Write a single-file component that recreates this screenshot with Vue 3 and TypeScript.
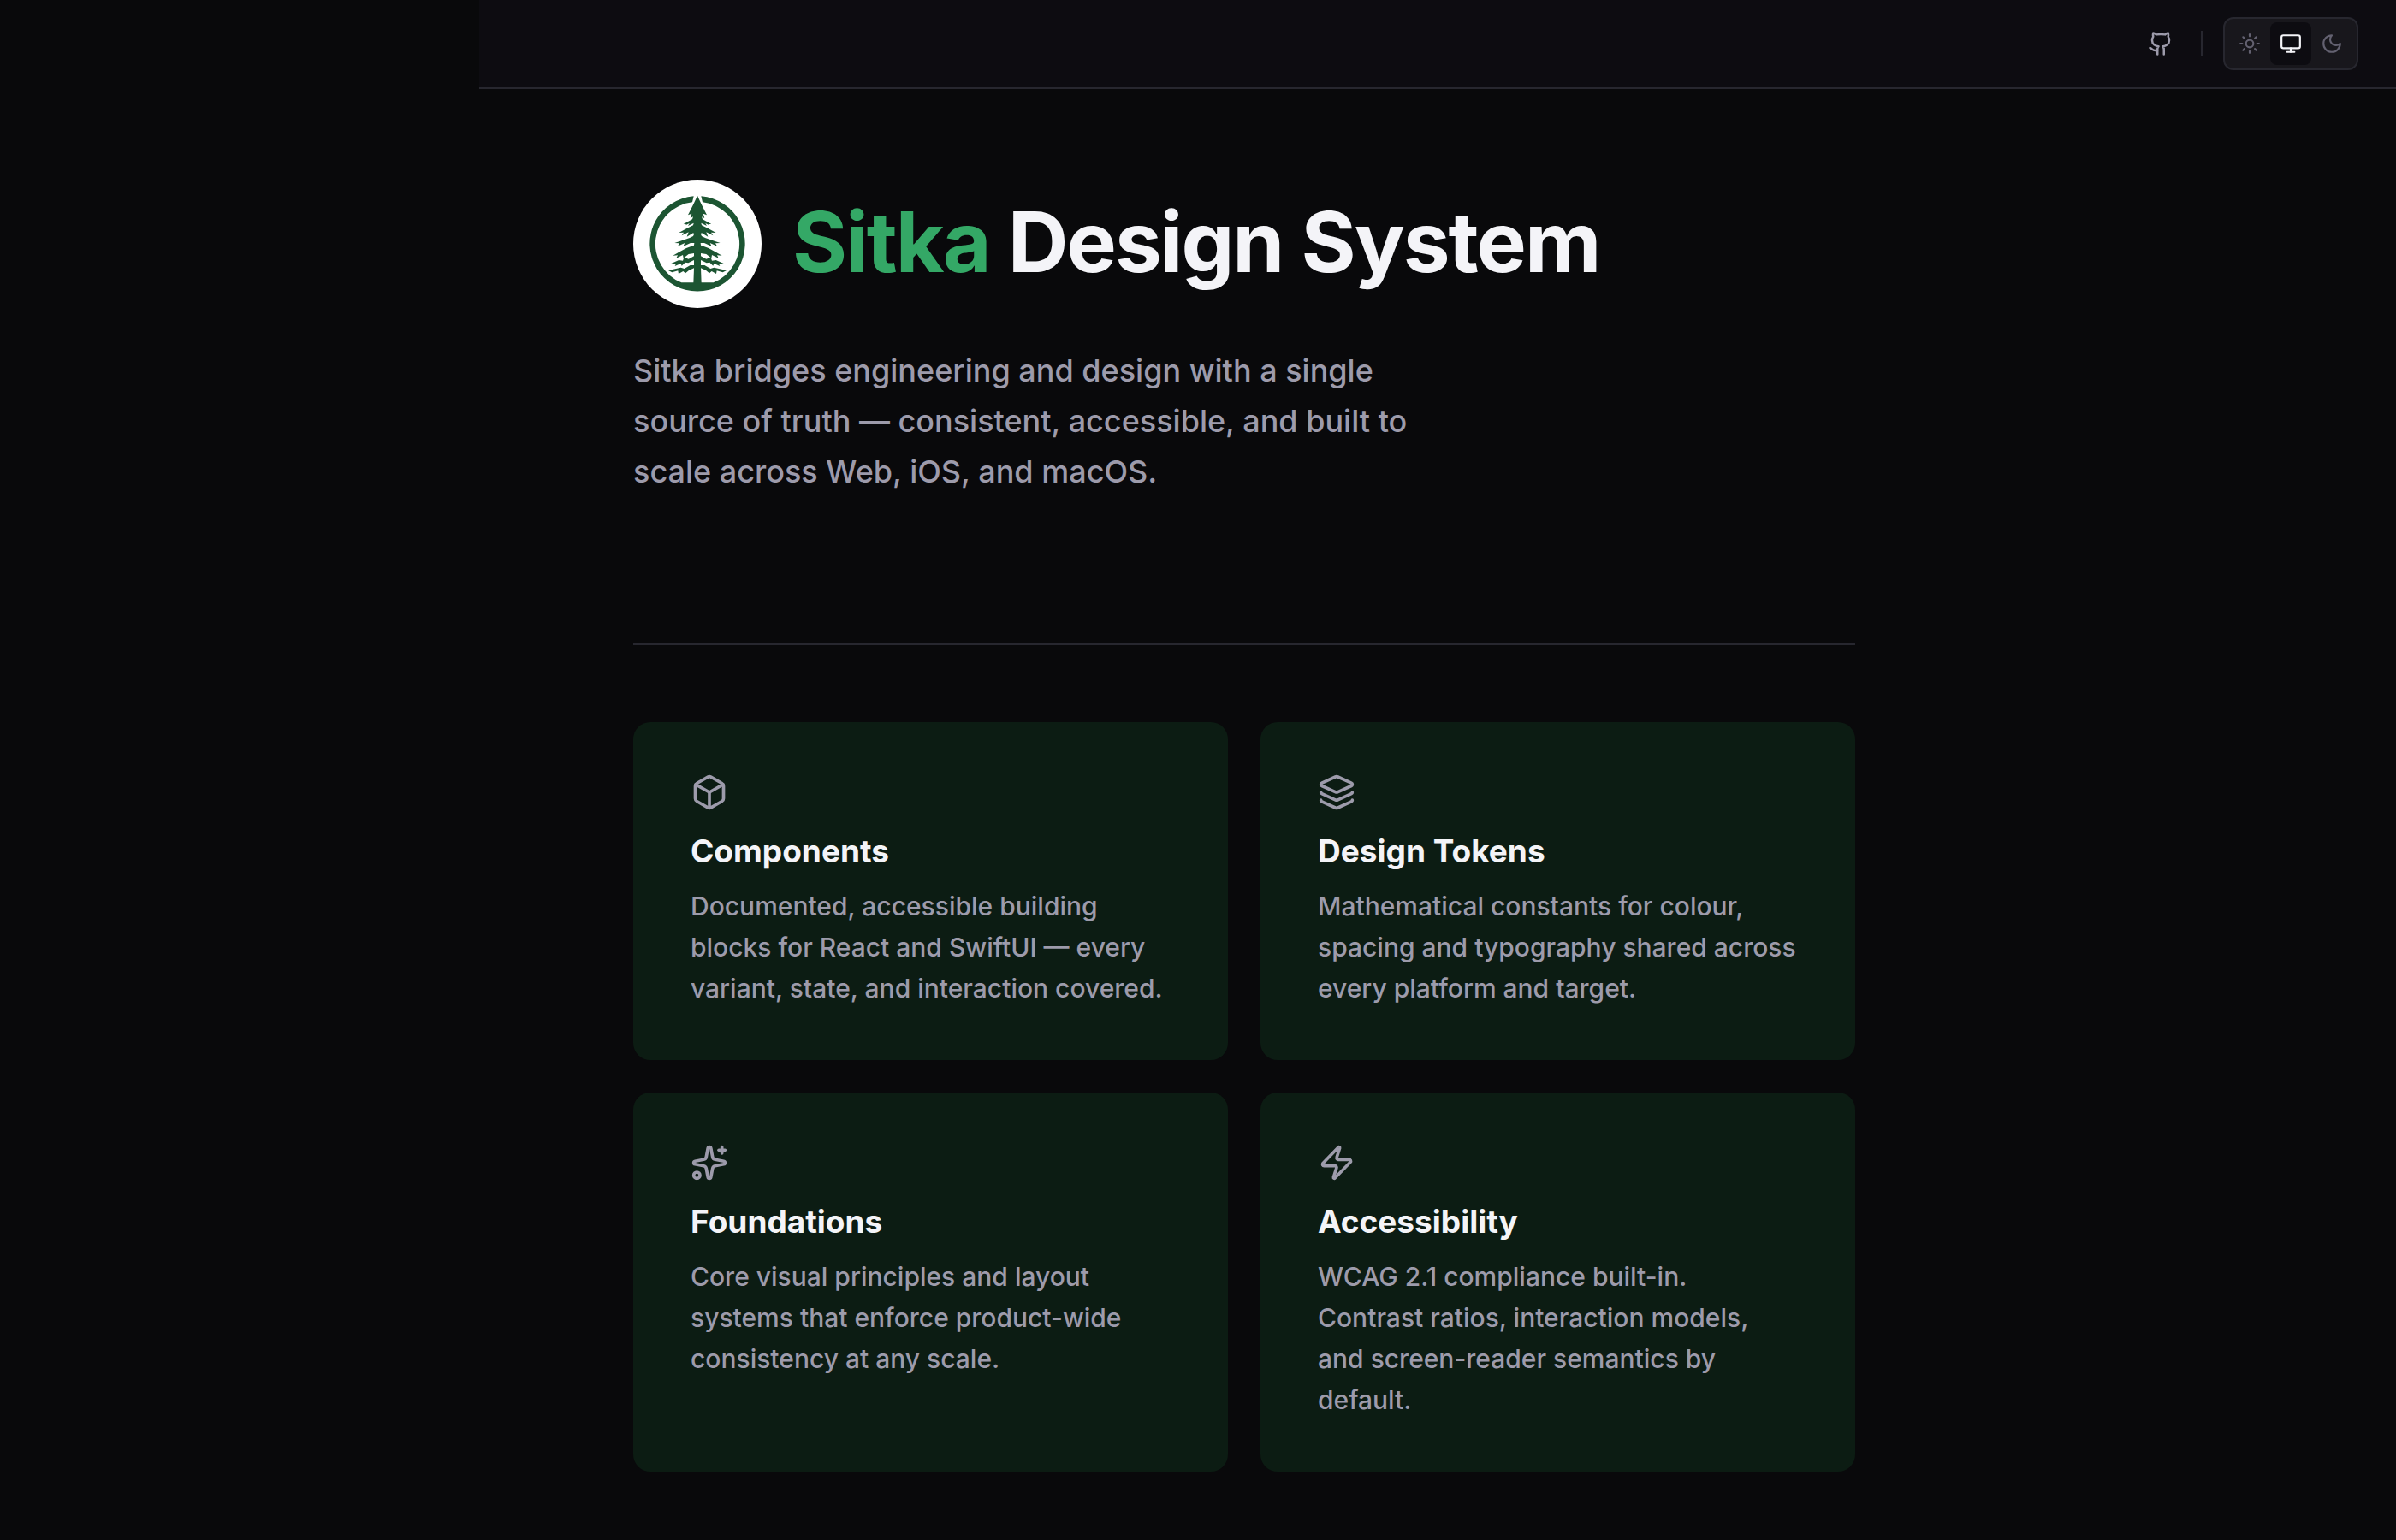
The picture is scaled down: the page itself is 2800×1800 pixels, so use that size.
<script setup lang="ts">
import { ref } from 'vue'

interface Card {
  title: string
  text: string
  icon: string[]
}

type Theme = 'light' | 'system' | 'dark'

const theme = ref<Theme>('system')

const themes: { id: Theme; label: string; icon: string[] }[] = [
  {
    id: 'light',
    label: 'Light theme',
    icon: [
      'M16 12a4 4 0 1 1-8 0 4 4 0 0 1 8 0Z',
      'M12 2v2', 'M12 20v2', 'm4.93 4.93 1.41 1.41', 'm17.66 17.66 1.41 1.41',
      'M2 12h2', 'M20 12h2', 'm6.34 17.66-1.41 1.41', 'm19.07 4.93-1.41 1.41',
    ],
  },
  {
    id: 'system',
    label: 'System theme',
    icon: [
      'M4 3h16a2 2 0 0 1 2 2v10a2 2 0 0 1-2 2H4a2 2 0 0 1-2-2V5a2 2 0 0 1 2-2Z',
      'M8 21h8', 'M12 17v4',
    ],
  },
  { id: 'dark', label: 'Dark theme', icon: ['M12 3a6 6 0 0 0 9 9 9 9 0 1 1-9-9Z'] },
]

// Right half of the spruce; the left half is the same path mirrored.
const spruce =
  'M225 56 L239 86 L258 124 L245 119 L250 135 L240 130 L243 139 L254 145 L274 156 L264 156 L267 160 L253 153 L258 162 L238 152 ' +
  'L240 160 L264 172 L290 186 L273 185 L280 196 L256 184 L262 200 L240 187 L236 190 L240 198 L252 204 L276 212 L305 222 L288 223 ' +
  'L294 233 L269 222 L275 234 L249 222 L236 222 L237 230 L264 240 L290 254 L311 266 L294 265 L299 275 L276 264 L274 275 L256 261 ' +
  'L237 258 L237 268 L256 278 L272 272 L276 284 L290 282 L317 294 L300 295 L304 303 L283 294 L280 302 L268 290 L257 292 L237 282 ' +
  'L237 300 L250 300 L271 312 L283 308 L327 318 L314 325 L293 319 L291 330 L275 321 L267 328 L255 318 L237 310 L239 364 H225Z'

const cards: Card[] = [
  {
    title: 'Components',
    text: 'Documented, accessible building blocks for React and SwiftUI — every variant, state, and interaction covered.',
    icon: [
      'M21 8a2 2 0 0 0-1-1.73l-7-4a2 2 0 0 0-2 0l-7 4A2 2 0 0 0 3 8v8a2 2 0 0 0 1 1.73l7 4a2 2 0 0 0 2 0l7-4A2 2 0 0 0 21 16Z',
      'm3.3 7 8.7 5 8.7-5', 'M12 22V12',
    ],
  },
  {
    title: 'Design Tokens',
    text: 'Mathematical constants for colour, spacing and typography shared across every platform and target.',
    icon: [
      'M12.83 2.18a2 2 0 0 0-1.66 0L2.6 6.08a1 1 0 0 0 0 1.83l8.58 3.91a2 2 0 0 0 1.66 0l8.58-3.9a1 1 0 0 0 0-1.83z',
      'M2 12a1 1 0 0 0 .58.91l8.6 3.91a2 2 0 0 0 1.65 0l8.58-3.9A1 1 0 0 0 22 12',
      'M2 17a1 1 0 0 0 .58.91l8.6 3.91a2 2 0 0 0 1.65 0l8.58-3.9A1 1 0 0 0 22 17',
    ],
  },
  {
    title: 'Foundations',
    text: 'Core visual principles and layout systems that enforce product-wide consistency at any scale.',
    icon: [
      'M11.017 2.814a1 1 0 0 1 1.966 0l1.051 5.558a2 2 0 0 0 1.594 1.594l5.558 1.051a1 1 0 0 1 0 1.966l-5.558 1.051a2 2 0 0 0-1.594 1.594l-1.051 5.558a1 1 0 0 1-1.966 0l-1.051-5.558a2 2 0 0 0-1.594-1.594l-5.558-1.051a1 1 0 0 1 0-1.966l5.558-1.051a2 2 0 0 0 1.594-1.594z',
      'M20 2v4', 'M22 4h-4', 'M6 20a2 2 0 1 1-4 0 2 2 0 0 1 4 0Z',
    ],
  },
  {
    title: 'Accessibility',
    text: 'WCAG 2.1 compliance built-in. Contrast ratios, interaction models, and screen-reader semantics by default.',
    icon: [
      'M4 14a1 1 0 0 1-.78-1.63l9.9-10.2a.5.5 0 0 1 .86.46l-1.92 6.02A1 1 0 0 0 13 10h7a1 1 0 0 1 .78 1.63l-9.9 10.2a.5.5 0 0 1-.86-.46l1.92-6.02A1 1 0 0 0 11 14z',
    ],
  },
]
</script>

<template>
  <div class="layout">
    <aside class="sidebar"></aside>
    <div class="page">
      <header class="topbar">
        <a class="repo" href="#" aria-label="GitHub repository">
          <svg class="icon" viewBox="0 0 24 24" aria-hidden="true">
            <path d="M15 22v-4a4.8 4.8 0 0 0-1-3.5c3 0 6-2 6-5.5.08-1.25-.27-2.48-1-3.5.28-1.15.28-2.35 0-3.5 0 0-1 0-3 1.5-2.64-.5-5.36-.5-8 0C6 2 5 2 5 2c-.3 1.15-.3 2.35 0 3.5A5.403 5.403 0 0 0 4 9c0 3.5 3 5.5 6 5.5-.39.49-.68 1.05-.85 1.65-.17.6-.22 1.23-.15 1.85v4" />
            <path d="M9 18c-4.51 2-5-2-7-2" />
          </svg>
        </a>
        <span class="divider"></span>
        <div class="themes" role="group" aria-label="Theme">
          <button
            v-for="t in themes"
            :key="t.id"
            type="button"
            class="theme"
            :class="{ active: theme === t.id }"
            :aria-label="t.label"
            :aria-pressed="theme === t.id"
            @click="theme = t.id"
          >
            <svg class="icon" viewBox="0 0 24 24" aria-hidden="true">
              <path v-for="d in t.icon" :key="d" :d="d" />
            </svg>
          </button>
        </div>
      </header>

      <main class="content">
        <section class="hero">
          <div class="brand">
            <svg class="logo" viewBox="0 0 450 450" aria-hidden="true">
              <circle cx="225" cy="225" r="225" fill="#fff" />
              <g fill="#1c5532">
                <path d="M212 58A167 167 0 1 0 238 58L243 79A147 147 0 0 1 281 361H169A147 147 0 0 1 207 79Z" />
                <path :d="spruce" />
                <path :d="spruce" transform="translate(450 0) scale(-1 1)" />
              </g>
            </svg>
            <h1 class="title"><span class="accent">Sitka</span> Design System</h1>
          </div>
          <p class="lead">
            Sitka bridges engineering and design with a single source of truth — consistent,
            accessible, and built to scale across Web, iOS, and macOS.
          </p>
        </section>

        <section class="cards">
          <a v-for="card in cards" :key="card.title" class="card" href="#">
            <svg class="icon card-icon" viewBox="0 0 24 24" aria-hidden="true">
              <path v-for="d in card.icon" :key="d" :d="d" />
            </svg>
            <h2 class="card-title">{{ card.title }}</h2>
            <p class="card-text">{{ card.text }}</p>
          </a>
        </section>
      </main>
    </div>
  </div>
</template>

<style>
body {
  background: #09090b;
}
</style>

<style scoped>
.layout {
  display: flex;
  min-height: 100vh;
  background: #09090b;
  color: #f4f4f8;
  font-family: Inter, "Liberation Sans", sans-serif;
}

.sidebar {
  flex: 0 0 560px;
}

.page {
  flex: 1;
  min-width: 0;
}

.topbar {
  display: flex;
  align-items: center;
  justify-content: flex-end;
  height: 102px;
  padding-right: 44px;
  border-bottom: 2px solid #27272f;
  background: #0d0c11;
}

.icon {
  display: block;
  fill: none;
  stroke: currentColor;
  stroke-width: 2;
  stroke-linecap: round;
  stroke-linejoin: round;
}

.repo {
  color: #9d9bab;
}

.repo .icon {
  width: 30px;
  height: 30px;
}

.divider {
  width: 2px;
  height: 30px;
  margin: 0 24px 0 32px;
  background: #27272f;
}

.themes {
  display: flex;
  padding: 4px 5px;
  border: 2px solid #27272f;
  border-radius: 12px;
  background: #18171c;
}

.theme {
  display: flex;
  align-items: center;
  justify-content: center;
  width: 48px;
  height: 50px;
  padding: 0;
  border: 0;
  border-radius: 8px;
  background: transparent;
  color: #636170;
  cursor: pointer;
}

.theme.active {
  background: #0d0c11;
  color: #f4f4f8;
}

.theme .icon {
  width: 26px;
  height: 26px;
}

.content {
  max-width: 1428px;
  padding: 106px 180px 80px;
}

.hero {
  padding-bottom: 171px;
  border-bottom: 2px solid #27272f;
}

.brand {
  display: flex;
  align-items: flex-start;
  gap: 36px;
}

.logo {
  flex: none;
  width: 150px;
  height: 150px;
}

.title {
  margin: 0;
  font-size: 98px;
  font-weight: 700;
  line-height: 146px;
  letter-spacing: -2px;
}

.accent {
  color: #34a866;
}

.lead {
  max-width: 920px;
  margin: 44px 0 0;
  color: #9d9bab;
  font-size: 36px;
  font-weight: 500;
  line-height: 59px;
}

.cards {
  display: grid;
  grid-template-columns: 1fr 1fr;
  gap: 38px;
  padding-top: 90px;
}

.card {
  padding: 60px 67px;
  border-radius: 20px;
  background: #0c1c13;
  color: inherit;
  text-decoration: none;
}

.card-icon {
  width: 44px;
  height: 44px;
  color: #9d9bab;
}

.card-title {
  margin: 24px 0 0;
  font-size: 37px;
  font-weight: 700;
  line-height: 46px;
}

.card-text {
  margin: 17px 0 0;
  color: #9d9bab;
  font-size: 30px;
  font-weight: 500;
  line-height: 48px;
}
</style>
